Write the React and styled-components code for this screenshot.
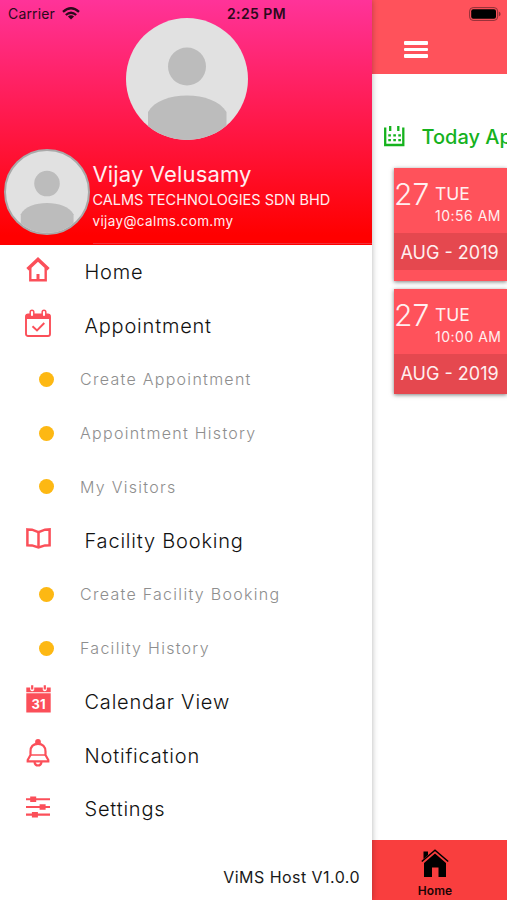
import React, {Component} from 'react';
import styled, {createGlobalStyle} from 'styled-components';

const GlobalStyle = createGlobalStyle`
  * {
    box-sizing: border-box;
  }
  body {
    margin: 0;
    overflow: hidden;
    font-family: Inter, 'Liberation Sans', sans-serif;
  }
`;
const Screen = styled.div`
  position: relative;
  display: flex;
  width: 507px;
  height: 900px;
  overflow: hidden;
  background-color: white;
`;

const StatusBar = styled.div`
  position: absolute;
  top: 0;
  left: 0;
  right: 0;
  z-index: 3;
  height: 27px;
  padding: 0 6px 0 8px;
  display: grid;
  grid-template-columns: 219px 1fr auto;
  align-items: center;
  font-size: 14px;
  color: #2b0a1c;
`;
const Carrier = styled.div`
  display: flex;
  align-items: center;
  gap: 7px;
  letter-spacing: 0.15px;
`;
const Time = styled.div`
  font-weight: 600;
  letter-spacing: 0.4px;
  white-space: nowrap;
`;
const Icon = styled.svg`
  display: block;
  flex: none;
  overflow: visible;
`;

const Drawer = styled.div`
  position: relative;
  z-index: 2;
  flex: 0 0 372px;
  display: flex;
  flex-direction: column;
  background-color: white;
  box-shadow: 0 0 6px rgba(0, 0, 0, 0.3);
`;
const Profile = styled.div`
  height: 245px;
  padding-top: 18px;
  background: linear-gradient(#ff3399, #ff0000 96%);
`;
const Avatar = styled.div`
  width: ${p => p.$size}px;
  height: ${p => p.$size}px;
  margin-left: ${p => p.$left}px;
  flex: none;
  border-radius: 50%;
  overflow: hidden;
  border: ${p => p.$ring || 0}px solid #a9a9a9;
  background-color: #e1e1e1;
`;
const User = styled.div`
  display: flex;
  height: 104px;
`;
const AvatarSlot = styled.div`
  padding-top: 9px;
`;
const UserText = styled.div`
  flex: 1;
  margin-left: 2.5px;
  padding-top: 20px;
  border-bottom: 1px solid #f0323a;
  color: #ffeef0;
  white-space: nowrap;
`;
const UserName = styled.div`
  font-size: 22px;
  line-height: 28px;
  letter-spacing: 0.15px;
`;
const Company = styled.div`
  font-size: 14.5px;
  line-height: 24px;
`;
const Email = styled.div`
  font-size: 13.5px;
  line-height: 19px;
  letter-spacing: 0.37px;
`;

const Menu = styled.div`
  flex: 1;
`;
const MenuItem = styled.div`
  display: flex;
  align-items: center;
  height: 53.75px;
`;
const MenuIcon = styled.div`
  width: 26px;
  margin-left: 25px;
  margin-right: 33.5px;
  padding-bottom: 5px;
  display: flex;
  justify-content: center;
`;
const MenuLabel = styled.div`
  font-size: 20px;
  font-weight: 300;
  letter-spacing: 0.8px;
  color: #111;
`;
const Dot = styled.div`
  width: 15px;
  height: 15px;
  margin-left: 38.5px;
  margin-right: 26.5px;
  border-radius: 50%;
  background-color: #fdb813;
`;
const SubLabel = styled.div`
  font-size: 16px;
  font-weight: 300;
  letter-spacing: 1.28px;
  color: #8e8e8e;
`;
const Version = styled.div`
  height: 46px;
  padding-right: 12px;
  line-height: 46px;
  text-align: right;
  font-size: 16px;
  letter-spacing: 0.45px;
  color: #1a1a1a;
`;

const Page = styled.div`
  flex: 1;
  min-width: 0;
  display: flex;
  flex-direction: column;
`;
const TopBar = styled.div`
  height: 74px;
  padding: 41px 0 0 32px;
  background-color: #ff525b;
`;
const Burger = styled.div`
  width: 24px;
  display: flex;
  flex-direction: column;
  gap: 3px;
`;
const BurgerLine = styled.div`
  height: 3.7px;
  border-radius: 1px;
  background-color: white;
`;
const Heading = styled.div`
  display: flex;
  align-items: center;
  gap: 17px;
  height: 94px;
  padding: 31px 0 0 11.5px;
  font-size: 20px;
  font-weight: 500;
  color: #15b21d;
  white-space: nowrap;
`;
const Cards = styled.div`
  flex: 1;
  display: flex;
  flex-direction: column;
  gap: 8px;
  padding-left: 22px;
`;
const Card = styled.div`
  height: ${p => p.$height}px;
  background-color: #ff525b;
  box-shadow: 0 1px 4px rgba(0, 0, 0, 0.5);
  color: #ffeff0;
  white-space: nowrap;
`;
const CardTop = styled.div`
  display: flex;
  height: 65px;
`;
const Day = styled.div`
  width: 41px;
  padding-top: 8px;
  font-size: 30px;
  font-weight: 300;
  line-height: 37px;
`;
const When = styled.div`
  padding-top: 14px;
`;
const Weekday = styled.div`
  font-size: 17.5px;
  line-height: 24px;
`;
const Hour = styled.div`
  font-size: 14px;
  line-height: 20px;
  letter-spacing: 0.5px;
`;
const Month = styled.div`
  height: ${p => p.$height}px;
  padding-left: 6.5px;
  background-color: #e5484f;
  font-size: 18px;
  line-height: 39px;
`;
const TabBar = styled.div`
  background-color: #f93e3e;
`;
const Tab = styled.div`
  height: 60px;
  width: 126px;
  padding-top: 9px;
  display: flex;
  flex-direction: column;
  align-items: center;
  gap: 6px;
  font-size: 12px;
  font-weight: 600;
  line-height: 15px;
  letter-spacing: 0.1px;
  color: #1c0505;
`;

const RED = '#fb4f59';
const GREEN = '#15b21d';

const Wifi = () => (
  <Icon width="18" height="13" viewBox="0 0 18 13" fill="none" stroke="#2b0a1c" strokeWidth="2.3">
    <path d="M1 4.8Q9-2.4 17 4.8"/>
    <path d="M3.8 8Q9 3.4 14.2 8"/>
    <path d="M9 12.4L5.9 9.5Q9 7 12.1 9.5Z" fill="#2b0a1c" stroke="none"/>
  </Icon>
);
const Battery = () => (
  <Icon width="32" height="14" viewBox="0 0 32 14">
    <rect x="0.6" y="0.6" width="28" height="12.8" rx="3.5" fill="none" stroke="#8e3037"/>
    <rect x="2.2" y="2.2" width="24.8" height="9.6" rx="2" fill="#000"/>
    <path d="M29.8 4.6Q31.6 5.2 31.6 7T29.8 9.4Z" fill="#8e3037"/>
  </Icon>
);
const Person = () => (
  <Icon width="100%" height="100%" viewBox="0 0 122 122">
    <circle cx="61" cy="48.5" r="19" fill="#bcbcbc"/>
    <path d="M22 122V94C28 83 44 77.5 61 77.5S94 83 100.5 94V122Z" fill="#bcbcbc"/>
  </Icon>
);
const HomeIcon = () => (
  <Icon width="24" height="25" viewBox="0 0 24 25" fill="none" stroke={RED}>
    <path d="M1.5 12.2L12 2.4L22.5 12.2" strokeWidth="3.4"/>
    <path d="M4.3 11V23.3H19.7V11" strokeWidth="2.4"/>
    <path d="M12 17V23" strokeWidth="3"/>
  </Icon>
);
const AppointmentIcon = () => (
  <Icon width="26" height="28" viewBox="0 0 26 28">
    <rect x="1" y="6" width="24" height="21" rx="2" fill="none" stroke={RED} strokeWidth="1.9"/>
    <path d="M0.5 10V6Q0.5 4.5 3 4.5H23Q25.5 4.5 25.5 6V10Z" fill={RED}/>
    <rect x="5.2" y="1.2" width="3.6" height="6.6" rx="1.8" fill="#fff" stroke={RED} strokeWidth="1.5"/>
    <rect x="17.2" y="1.2" width="3.6" height="6.6" rx="1.8" fill="#fff" stroke={RED} strokeWidth="1.5"/>
    <path d="M7.5 17.2L12 21.5L19.3 14" fill="none" stroke={RED} strokeWidth="1.9"/>
  </Icon>
);
const BookIcon = () => (
  <Icon width="25" height="21" viewBox="0 0 25 21" fill="none" stroke={RED} strokeWidth="2.5">
    <path d="M1.4 1.4L6 1.7L12.5 4.2L19 1.7L23.6 1.4V17.2L19 17.4L12.5 19.5L6 17.4L1.4 17.2Z"/>
    <path d="M12.5 4V19"/>
  </Icon>
);
const DateText = styled.text`
  font-size: 13px;
  font-weight: 700;
  fill: white;
`;
const CalendarIcon = () => (
  <Icon width="25" height="28" viewBox="0 0 25 28">
    <path d="M0.3 2.5H24.7V7.3H0.3ZM0.3 8.3H24.7V27.5H0.3Z" fill={RED}/>
    <path d="M4.2 2V5Q6.2 7.5 8.2 5V2ZM16.8 2V5Q18.8 7.5 20.8 5V2Z" fill="#fff"/>
    <path d="M6.2 0.2V4.5M18.8 0.2V4.5" stroke={RED} strokeWidth="2.2"/>
    <DateText x="12.5" y="23.5" textAnchor="middle">31</DateText>
  </Icon>
);
const BellIcon = () => (
  <Icon width="24" height="28" viewBox="0 0 24 28" fill="none" stroke={RED} strokeWidth="2.2">
    <circle cx="12" cy="3" r="1.8" fill={RED}/>
    <path d="M4.5 16V12.5C4.5 7.500 7.5 4.8 12 4.8S19.5 7.5 19.5 12.5V16L22.3 21V22.3H1.7V21Z"/>
    <path d="M4.5 16H19.5" strokeWidth="1.5"/>
    <path d="M8.5 23Q9 26.5 12 26.5T15.5 23"/>
  </Icon>
);
const SettingsIcon = () => (
  <Icon width="24" height="22" viewBox="0 0 24 22" fill={RED}>
    <path d="M0 2.2H24V4.3H0ZM0 9.9H24V12H0ZM0 17.6H24V19.7H0Z"/>
    <path d="M4.2 0.5H10.2V6H4.2ZM13.6 8.2H19.6V13.7H13.6ZM5.9 15.9H11.9V21.4H5.9Z"/>
  </Icon>
);
const TodayIcon = () => (
  <Icon width="21" height="21" viewBox="0 0 21 21" fill="none" stroke={GREEN} strokeWidth="2.3">
    <path d="M1.2 1.5V19H19.3V1.5"/>
    <path d="M6.2 0V5M14.3 0V5"/>
    <path d="M4.3 9.3H17M4.3 14.2H17" strokeDasharray="2.6 2.4"/>
  </Icon>
);
const HouseIcon = () => (
  <Icon width="28" height="28" viewBox="0 0 28 28">
    <path d="M2.5 2.5H7V6L2.5 10Z"/>
    <path d="M0.8 12.5L14 1.2L27.2 12.5" fill="none" stroke="#000" strokeWidth="1.5"/>
    <path d="M14 4.5L25 14V28H17.5V18.5H11V28H3V14Z"/>
  </Icon>
);

const menu = [
  {label: 'Home', icon: HomeIcon},
  {label: 'Appointment', icon: AppointmentIcon},
  {label: 'Create Appointment'},
  {label: 'Appointment History'},
  {label: 'My Visitors'},
  {label: 'Facility Booking', icon: BookIcon},
  {label: 'Create Facility Booking'},
  {label: 'Facility History'},
  {label: 'Calendar View', icon: CalendarIcon},
  {label: 'Notification', icon: BellIcon},
  {label: 'Settings', icon: SettingsIcon},
];

const appointments = [
  {hour: '10:56 AM', height: 113, month: 37},
  {hour: '10:00 AM', height: 105, month: 40},
];

class App extends Component {
  render() {
    return (
      <Screen>
        <GlobalStyle/>
        <StatusBar>
          <Carrier>Carrier <Wifi/></Carrier>
          <Time>2:25 PM</Time>
          <Battery/>
        </StatusBar>
        <Drawer>
          <Profile>
            <Avatar $size={122} $left={125.5}><Person/></Avatar>
            <User>
              <AvatarSlot><Avatar $size={86} $left={4} $ring={2}><Person/></Avatar></AvatarSlot>
              <UserText>
                <UserName>Vijay Velusamy</UserName>
                <Company>CALMS TECHNOLOGIES SDN BHD</Company>
                <Email>vijay@calms.com.my</Email>
              </UserText>
            </User>
          </Profile>
          <Menu>
            {menu.map(({label, icon: ItemIcon}) => (
              <MenuItem key={label}>
                {ItemIcon ? <MenuIcon><ItemIcon/></MenuIcon> : <Dot/>}
                {ItemIcon ? <MenuLabel>{label}</MenuLabel> : <SubLabel>{label}</SubLabel>}
              </MenuItem>
            ))}
          </Menu>
          <Version>ViMS Host V1.0.0</Version>
        </Drawer>
        <Page>
          <TopBar>
            <Burger><BurgerLine/><BurgerLine/><BurgerLine/></Burger>
          </TopBar>
          <Heading><TodayIcon/>Today Appointments</Heading>
          <Cards>
            {appointments.map(a => (
              <Card key={a.hour} $height={a.height}>
                <CardTop>
                  <Day>27</Day>
                  <When>
                    <Weekday>TUE</Weekday>
                    <Hour>{a.hour}</Hour>
                  </When>
                </CardTop>
                <Month $height={a.month}>AUG - 2019</Month>
              </Card>
            ))}
          </Cards>
          <TabBar>
            <Tab><HouseIcon/>Home</Tab>
          </TabBar>
        </Page>
      </Screen>
    );
  }
}

export default App;
